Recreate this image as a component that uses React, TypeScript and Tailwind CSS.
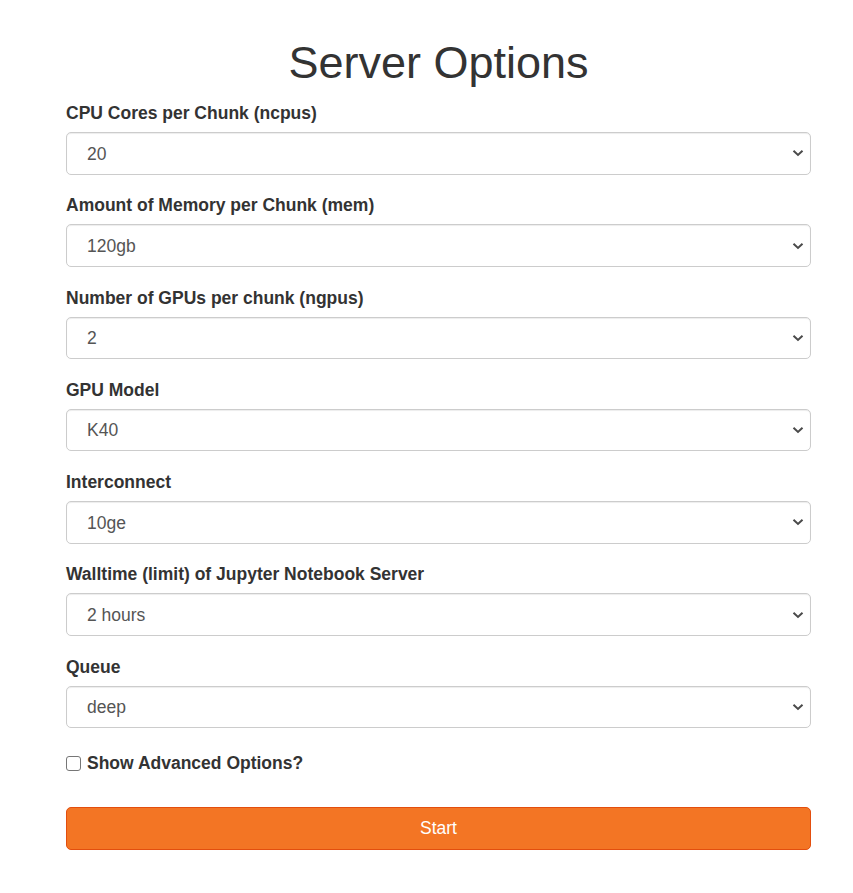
import * as React from "react";

const fields: { label: string; value: string }[] = [
  { label: "CPU Cores per Chunk (ncpus)", value: "20" },
  { label: "Amount of Memory per Chunk (mem)", value: "120gb" },
  { label: "Number of GPUs per chunk (ngpus)", value: "2" },
  { label: "GPU Model", value: "K40" },
  { label: "Interconnect", value: "10ge" },
  { label: "Walltime (limit) of Jupyter Notebook Server", value: "2 hours" },
  { label: "Queue", value: "deep" },
];

function Chevron() {
  return (
    <svg
      viewBox="0 0 12 8"
      className="pointer-events-none absolute right-[7px] top-1/2 h-[8px] w-[12px] -translate-y-1/2"
      fill="none"
      stroke="#4a4a4a"
      strokeWidth="2"
    >
      <path d="M1.5 1.8 L6 6 L10.5 1.8" />
    </svg>
  );
}

function SelectField({ label, value }: { label: string; value: string }) {
  return (
    <div className="mb-[18.75px]">
      <label className="mb-[6px] block h-[25px] text-[17.5px] font-bold leading-[25px] text-[#333]">
        {label}
      </label>
      <div className="relative">
        <select
          defaultValue={value}
          className="block h-[42.5px] w-full appearance-none rounded-[5px] border border-[#ccc] bg-white pl-[20px] pr-[30px] pt-[1px] text-[17.5px] text-[#555] shadow-[inset_0_1px_1px_rgba(0,0,0,0.075)] outline-none"
        >
          <option value={value}>{value}</option>
        </select>
        <Chevron />
      </div>
    </div>
  );
}

export default function App() {
  const [advanced, setAdvanced] = React.useState(false);

  return (
    <div className="min-h-[893px] bg-white font-['Liberation_Sans',Arial,sans-serif] text-[#333]">
      <div className="ml-[66px] w-[745px] pt-[38px]">
        <h1 className="mb-[13.5px] text-center text-[45px] font-medium leading-[49.5px] text-[#333]">
          Server Options
        </h1>
        <form onSubmit={(e) => e.preventDefault()}>
          {fields.map((f) => (
            <SelectField key={f.label} label={f.label} value={f.value} />
          ))}
          <label className="mt-[23px] flex h-[25px] items-center text-[17.5px] font-bold leading-[25px] text-[#333]">
            <input
              type="checkbox"
              checked={advanced}
              onChange={(e) => setAdvanced(e.target.checked)}
              className="mr-[6px] h-[15px] w-[15px] appearance-none rounded-[3px] border border-[#767676] bg-white"
            />
            Show Advanced Options?
          </label>
          <button
            type="submit"
            className="mt-[31px] block h-[42.5px] w-full rounded-[5px] border border-[#e34e0e] bg-[#f37524] text-[17.5px] text-white"
          >
            Start
          </button>
        </form>
      </div>
    </div>
  );
}
